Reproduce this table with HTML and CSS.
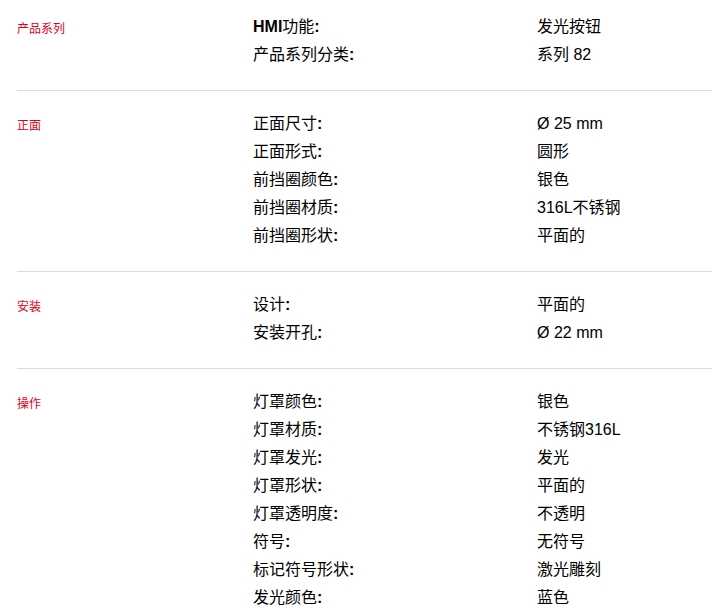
FILE: index.html
```html
<!DOCTYPE html>
<html lang="zh">
<head>
<meta charset="utf-8">
<link rel="stylesheet" href="styles.css">
</head>
<body>
<div class="specs">
  <section class="group">
    <div class="label">产品系列</div>
    <div class="rows">
      <div class="row"><span class="key"><b>HMI</b>功能<b>:</b></span><span class="val">发光按钮</span></div>
      <div class="row"><span class="key">产品系列分类<b>:</b></span><span class="val">系列 82</span></div>
    </div>
  </section>
  <section class="group">
    <div class="label">正面</div>
    <div class="rows">
      <div class="row"><span class="key">正面尺寸<b>:</b></span><span class="val">Ø 25 mm</span></div>
      <div class="row"><span class="key">正面形式<b>:</b></span><span class="val">圆形</span></div>
      <div class="row"><span class="key">前挡圈颜色<b>:</b></span><span class="val">银色</span></div>
      <div class="row"><span class="key">前挡圈材质<b>:</b></span><span class="val">316L不锈钢</span></div>
      <div class="row"><span class="key">前挡圈形状<b>:</b></span><span class="val">平面的</span></div>
    </div>
  </section>
  <section class="group">
    <div class="label">安装</div>
    <div class="rows">
      <div class="row"><span class="key">设计<b>:</b></span><span class="val">平面的</span></div>
      <div class="row"><span class="key">安装开孔<b>:</b></span><span class="val">Ø 22 mm</span></div>
    </div>
  </section>
  <section class="group">
    <div class="label">操作</div>
    <div class="rows">
      <div class="row"><span class="key">灯罩颜色<b>:</b></span><span class="val">银色</span></div>
      <div class="row"><span class="key">灯罩材质<b>:</b></span><span class="val">不锈钢316L</span></div>
      <div class="row"><span class="key">灯罩发光<b>:</b></span><span class="val">发光</span></div>
      <div class="row"><span class="key">灯罩形状<b>:</b></span><span class="val">平面的</span></div>
      <div class="row"><span class="key">灯罩透明度<b>:</b></span><span class="val">不透明</span></div>
      <div class="row"><span class="key">符号<b>:</b></span><span class="val">无符号</span></div>
      <div class="row"><span class="key">标记符号形状<b>:</b></span><span class="val">激光雕刻</span></div>
      <div class="row"><span class="key">发光颜色<b>:</b></span><span class="val">蓝色</span></div>
    </div>
  </section>
</div>
</body>
</html>
```

FILE: styles.css
```css
html, body {
  margin: 0;
  padding: 0;
  background: #fff;
}
body {
  font-family: "Liberation Sans", Arial, "Noto Sans CJK SC", sans-serif;
  color: #000;
}
.specs {
  padding: 13px 0 0 17px;
}
.group {
  display: grid;
  grid-template-columns: 236px 1fr;
  padding: 19px 0 21px;
  border-top: 1px solid #dcdcdc;
}
.group:first-child {
  border-top: none;
  padding-top: 0;
  padding-bottom: 21px;
}
.label {
  font-size: 12px;
  line-height: 28px;
  padding-top: 2px;
  color: #e2001a;
}
.rows {
  display: flex;
  flex-direction: column;
}
.row {
  display: grid;
  grid-template-columns: 284px 1fr;
  font-size: 16px;
  line-height: 28px;
  height: 28px;
}
.key b {
  font-weight: 700;
}
```
